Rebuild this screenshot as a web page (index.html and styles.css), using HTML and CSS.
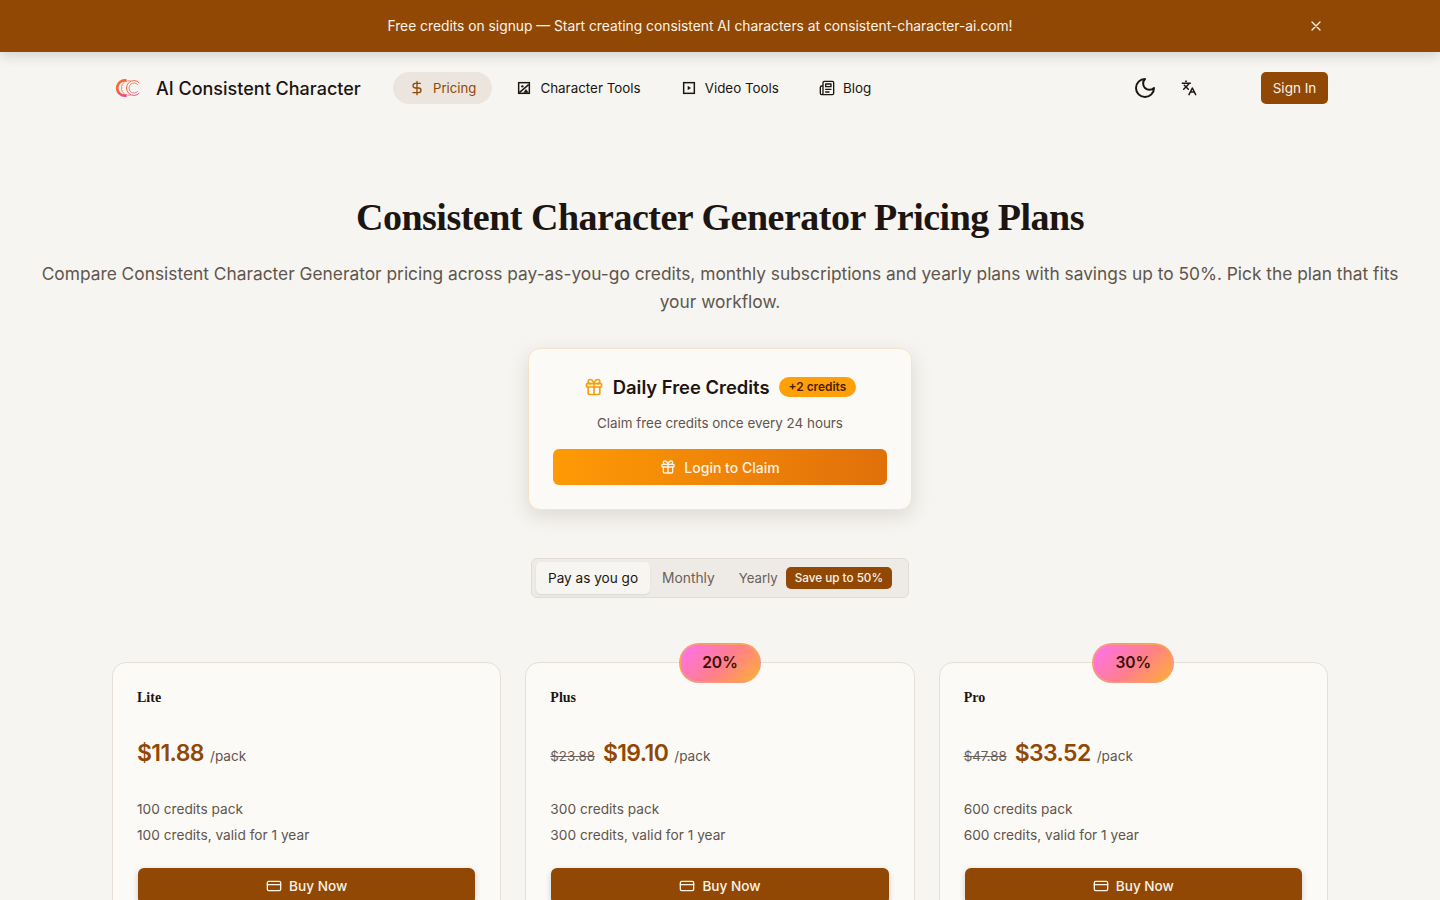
FILE: index.html
```html
<!DOCTYPE html>
<html lang="en">

<head>
  <meta charset="UTF-8" />
  <meta name="viewport" content="width=device-width, initial-scale=1.0" />
  <title>Consistent Character Generator Pricing Plans</title>
  <link rel="stylesheet" href="styles.css">
</head>

<body>
  <div class="page">
    <!-- top banner -->
    <div class="banner">
      <span>Free credits on signup — Start creating consistent AI characters at consistent-character-ai.com!</span>
      <button class="banner-close" aria-label="Close">
        <svg width="16" height="16" viewBox="0 0 24 24" class="icon"><path d="M18 6 6 18M6 6l12 12" /></svg>
      </button>
    </div>

    <header class="nav">
      <a class="brand">
        <svg class="brand-logo" width="24" height="24" viewBox="0 0 24 24" fill="none">
          <defs>
            <linearGradient id="logo-grad" x1="0" y1="0" x2="1" y2="1">
              <stop offset="0" stop-color="#f97316" />
              <stop offset="1" stop-color="#ec4899" />
            </linearGradient>
          </defs>
          <path d="M10.5 4.6a7.6 7.6 0 1 0 0 14.8" stroke="url(#logo-grad)" stroke-width="2.6" />
          <path d="M15 5.2a7.2 7.2 0 1 0 0 13.6" stroke="url(#logo-grad)" stroke-width="0.8" />
          <path d="M23.4 7a7.4 7.4 0 1 0 0 10" stroke="url(#logo-grad)" stroke-width="1" />
          <path d="M22 9a5 5 0 1 0 0 6" stroke="url(#logo-grad)" stroke-width="0.8" />
        </svg>
        <span>AI Consistent Character</span>
      </a>
      <nav class="nav-links">
        <a class="nav-link active">
          <svg width="16" height="16" viewBox="0 0 24 24" class="icon"><path d="M12 2v20M17 5H9.5a3.5 3.5 0 0 0 0 7h5a3.5 3.5 0 0 1 0 7H6" /></svg>
          Pricing
        </a>
        <a class="nav-link">
          <svg width="16" height="16" viewBox="0 0 24 24" class="icon icon-box">
            <rect x="4" y="4" width="16" height="16" />
            <circle cx="9.5" cy="9.5" r="1.8" class="icon-fill" />
            <path d="M5 19 19 7" />
            <path d="M11 19l4-5.5 4 5.5Z" class="icon-fill" />
          </svg>
          Character Tools
        </a>
        <a class="nav-link">
          <svg width="16" height="16" viewBox="0 0 24 24" class="icon icon-box">
            <rect x="4" y="4" width="16" height="16" />
            <path d="M10 8.5v7l5-3.5Z" class="icon-fill" />
          </svg>
          Video Tools
        </a>
        <a class="nav-link">
          <svg width="16" height="16" viewBox="0 0 24 24" class="icon"><path d="M4 22h16a2 2 0 0 0 2-2V4a2 2 0 0 0-2-2H8a2 2 0 0 0-2 2v16a2 2 0 0 1-2 2Zm0 0a2 2 0 0 1-2-2v-9c0-1.1.9-2 2-2h2" /><path d="M18 14h-8M15 18h-5" /><path d="M10 6h8v4h-8Z" /></svg>
          Blog
        </a>
      </nav>
      <div class="nav-actions">
        <svg width="24" height="24" viewBox="0 0 24 24" class="icon moon"><path d="M12 3a6 6 0 0 0 9 9 9 9 0 1 1-9-9Z" /></svg>
        <svg width="16" height="16" viewBox="0 0 24 24" class="icon lang"><path d="m5 8 6 6M4 14l6-6 2-3M2 5h12M7 2h1M22 22l-5-10-5 10M14 18h6" /></svg>
        <button class="sign-in">Sign In</button>
      </div>
    </header>

    <main class="main">
      <h1>Consistent Character Generator Pricing Plans</h1>
      <p class="lead">Compare Consistent Character Generator pricing across pay-as-you-go credits, monthly subscriptions and yearly plans with savings up to 50%. Pick the plan that fits your workflow.</p>

      <section class="daily">
        <div class="daily-title">
          <svg width="20" height="20" viewBox="0 0 24 24" class="icon gift"><rect x="3" y="8" width="18" height="4" rx="1" /><path d="M12 8v13M19 12v7a2 2 0 0 1-2 2H7a2 2 0 0 1-2-2v-7M7.5 8a2.5 2.5 0 0 1 0-5A4.8 8 0 0 1 12 8a4.8 8 0 0 1 4.5-5 2.5 2.5 0 0 1 0 5" /></svg>
          <h2>Daily Free Credits</h2>
          <span class="daily-badge">+2 credits</span>
        </div>
        <p class="daily-text">Claim free credits once every 24 hours</p>
        <button class="claim">
          <svg width="16" height="16" viewBox="0 0 24 24" class="icon"><rect x="3" y="8" width="18" height="4" rx="1" /><path d="M12 8v13M19 12v7a2 2 0 0 1-2 2H7a2 2 0 0 1-2-2v-7M7.5 8a2.5 2.5 0 0 1 0-5A4.8 8 0 0 1 12 8a4.8 8 0 0 1 4.5-5 2.5 2.5 0 0 1 0 5" /></svg>
          Login to Claim
        </button>
      </section>

      <div class="tabs">
        <button class="tab active">Pay as you go</button>
        <button class="tab">Monthly</button>
        <button class="tab tab-yearly">Yearly <span class="save">Save up to 50%</span></button>
      </div>

      <section class="plans">
        <article class="plan">
          <h3>Lite</h3>
          <div class="price"><strong>$11.88</strong><span class="per">/pack</span></div>
          <p class="plan-line">100 credits pack</p>
          <p class="plan-line">100 credits, valid for 1 year</p>
          <button class="buy">
            <svg width="16" height="16" viewBox="0 0 24 24" class="icon"><rect x="2" y="5" width="20" height="14" rx="2" /><path d="M2 10h20" /></svg>
            Buy Now
          </button>
        </article>
        <article class="plan">
          <span class="off">20%</span>
          <h3>Plus</h3>
          <div class="price"><s>$23.88</s><strong>$19.10</strong><span class="per">/pack</span></div>
          <p class="plan-line">300 credits pack</p>
          <p class="plan-line">300 credits, valid for 1 year</p>
          <button class="buy">
            <svg width="16" height="16" viewBox="0 0 24 24" class="icon"><rect x="2" y="5" width="20" height="14" rx="2" /><path d="M2 10h20" /></svg>
            Buy Now
          </button>
        </article>
        <article class="plan">
          <span class="off">30%</span>
          <h3>Pro</h3>
          <div class="price"><s>$47.88</s><strong>$33.52</strong><span class="per">/pack</span></div>
          <p class="plan-line">600 credits pack</p>
          <p class="plan-line">600 credits, valid for 1 year</p>
          <button class="buy">
            <svg width="16" height="16" viewBox="0 0 24 24" class="icon"><rect x="2" y="5" width="20" height="14" rx="2" /><path d="M2 10h20" /></svg>
            Buy Now
          </button>
        </article>
      </section>
    </main>
  </div>
</body>

</html>
```

FILE: styles.css
```css
* {
  box-sizing: border-box;
}

html,
body {
  margin: 0;
  padding: 0;
  height: 100%;
  overflow: hidden;
}

body {
  font-family: Inter, "Open Sans", sans-serif;
  background: #f6f5f2;
  color: #1c1511;
}

button {
  font-family: inherit;
  border: none;
  cursor: pointer;
  white-space: nowrap;
}

h1,
h2,
h3,
p {
  margin: 0;
}

.page {
  height: 900px;
  overflow: hidden;
}

.icon {
  fill: none;
  stroke: currentColor;
  stroke-width: 2;
  stroke-linecap: round;
  stroke-linejoin: round;
  flex: none;
}

.icon-box {
  stroke-width: 2.2;
  stroke-linecap: butt;
  stroke-linejoin: miter;
}

.icon-fill {
  fill: currentColor;
  stroke: none;
}

/* banner */
.banner {
  position: relative;
  z-index: 2;
  height: 52px;
  padding-right: 40px;
  display: flex;
  align-items: center;
  justify-content: center;
  background: #914805;
  color: #fdf3e6;
  font-size: 13.8px;
  box-shadow: 0 4px 12px rgba(0, 0, 0, 0.14);
}

.banner-close {
  position: absolute;
  right: 116px;
  top: 18px;
  width: 16px;
  height: 16px;
  padding: 0;
  display: flex;
  background: none;
  color: #fdf3e6;
}

/* nav */
.nav {
  height: 72px;
  width: 1216px;
  margin: 0 auto;
  display: flex;
  align-items: center;
}

.brand {
  display: flex;
  align-items: center;
  gap: 16px;
  padding-left: 4px;
  font-size: 18px;
  font-weight: 500;
  width: 281px;
}

.nav-links {
  display: flex;
  align-items: center;
  gap: 8px;
}

.nav-link {
  display: flex;
  align-items: center;
  gap: 8px;
  height: 32px;
  padding: 0 16px;
  border-radius: 16px;
  font-size: 13.4px;
}

.nav-link.active {
  font-size: 13.2px;
  background: #ebe5dd;
  color: #914805;
}

.nav-actions {
  margin-left: auto;
  display: flex;
  align-items: center;
}

.lang {
  margin-left: 24px;
  stroke-width: 2.2;
}

.sign-in {
  margin-left: 64px;
  height: 32px;
  width: 67px;
  padding: 0;
  background: #914805;
  color: #fdf3e6;
  font-size: 13.5px;
  border-radius: 5px;
}

/* heading */
.main {
  padding: 0 32px;
  text-align: center;
}

h1 {
  margin-top: 70px;
  font-family: "Liberation Serif", serif;
  font-size: 38px;
  line-height: 46px;
  letter-spacing: -0.5px;
  font-weight: 700;
}

.lead {
  width: 1376px;
  margin: 20px auto 0;
  font-size: 17.33px;
  line-height: 28px;
  color: #5f554c;
}

/* daily credits card */
.daily {
  width: 384px;
  height: 162px;
  margin: 32px auto 0;
  padding: 24px;
  background: #fcfaf7;
  border: 1px solid #f5e3cc;
  border-radius: 12px;
  box-shadow: 0 6px 20px rgba(80, 50, 20, 0.14);
}

.daily-title {
  display: flex;
  align-items: center;
  justify-content: center;
  gap: 9px;
  height: 28px;
}

.daily-title h2 {
  font-size: 18.4px;
  font-weight: 600;
}

.gift {
  color: #f59e0b;
}

.daily-badge {
  height: 20px;
  line-height: 20px;
  padding: 0 10px;
  border-radius: 10px;
  background: #ff9f0a;
  color: #4a1d05;
  font-size: 11.9px;
  font-weight: 600;
}

.daily-text {
  margin-top: 12px;
  font-size: 13.4px;
  line-height: 20px;
  color: #5f554c;
}

.claim {
  margin-top: 16px;
  width: 100%;
  height: 36px;
  display: flex;
  align-items: center;
  justify-content: center;
  gap: 8px;
  border-radius: 6px;
  color: #fdf3e6;
  font-size: 14px;
  font-weight: 500;
  background: linear-gradient(90deg, #ff9a05, #e0700a);
}

/* tabs */
.tabs {
  width: 378px;
  height: 40px;
  margin: 48px auto 0;
  padding: 3px 4px;
  display: flex;
  align-items: center;
  background: #eeeae5;
  border: 1px solid #e2dcd4;
  border-radius: 6px;
}

.tab {
  height: 32px;
  padding: 0 12px;
  display: flex;
  align-items: center;
  gap: 8px;
  background: none;
  font-size: 13.8px;
  color: #6a6058;
  border-radius: 5px;
}

.tab.active {
  width: 114px;
  justify-content: center;
  padding: 0;
  font-size: 13.6px;
  background: #f6f5f2;
  color: #1c1511;
  box-shadow: 0 1px 2px rgba(0, 0, 0, 0.08);
}

.tab-yearly {
  padding-right: 0;
  font-size: 13.2px;
}

.save {
  height: 22px;
  line-height: 22px;
  padding: 0 9px;
  border-radius: 5px;
  background: #914805;
  color: #fdf3e6;
  font-size: 11.7px;
  font-weight: 500;
}

/* plan cards */
.plans {
  width: 1216px;
  margin: 64px auto 0;
  display: grid;
  grid-template-columns: repeat(3, 1fr);
  gap: 24px;
  text-align: left;
}

.plan {
  position: relative;
  height: 320px;
  padding: 24px;
  background: #fcfaf7;
  border: 1px solid #e5dfd8;
  border-radius: 14px;
}

.plan h3 {
  margin-top: 1px;
  font-family: "Liberation Serif", serif;
  font-size: 14px;
  line-height: 20px;
  font-weight: 700;
}

.off {
  position: absolute;
  top: -20px;
  left: 50%;
  transform: translateX(-50%);
  width: 82px;
  height: 40px;
  line-height: 35px;
  text-align: center;
  border: 2px solid rgba(245, 170, 90, 0.6);
  border-radius: 20px;
  background: linear-gradient(135deg, #ff70f0, #ff8088 55%, #ffb035);
  color: #3a1008;
  font-size: 15.6px;
  font-weight: 600;
}

.price {
  margin-top: 29px;
  height: 36px;
  display: flex;
  align-items: baseline;
  gap: 8px;
}

.price s {
  font-size: 13.3px;
  color: #6a6058;
}

.price strong {
  font-size: 23px;
  line-height: 32px;
  letter-spacing: -0.6px;
  font-weight: 600;
  color: #914805;
}

.per {
  font-size: 13.6px;
  margin-left: -2px;
  color: #5f554c;
}

.plan-line {
  font-size: 13.7px;
  line-height: 26px;
  color: #5f554c;
}

.price + .plan-line {
  margin-top: 23px;
}

.buy {
  margin-top: 20px;
  margin-left: 1px;
  width: calc(100% - 2px);
  height: 36px;
  padding-bottom: 2px;
  display: flex;
  align-items: center;
  justify-content: center;
  gap: 7px;
  border-radius: 6px;
  background: #914805;
  color: #fdf3e6;
  font-size: 13.6px;
  font-weight: 500;
  box-shadow: 0 2px 6px rgba(0, 0, 0, 0.18);
}
```
